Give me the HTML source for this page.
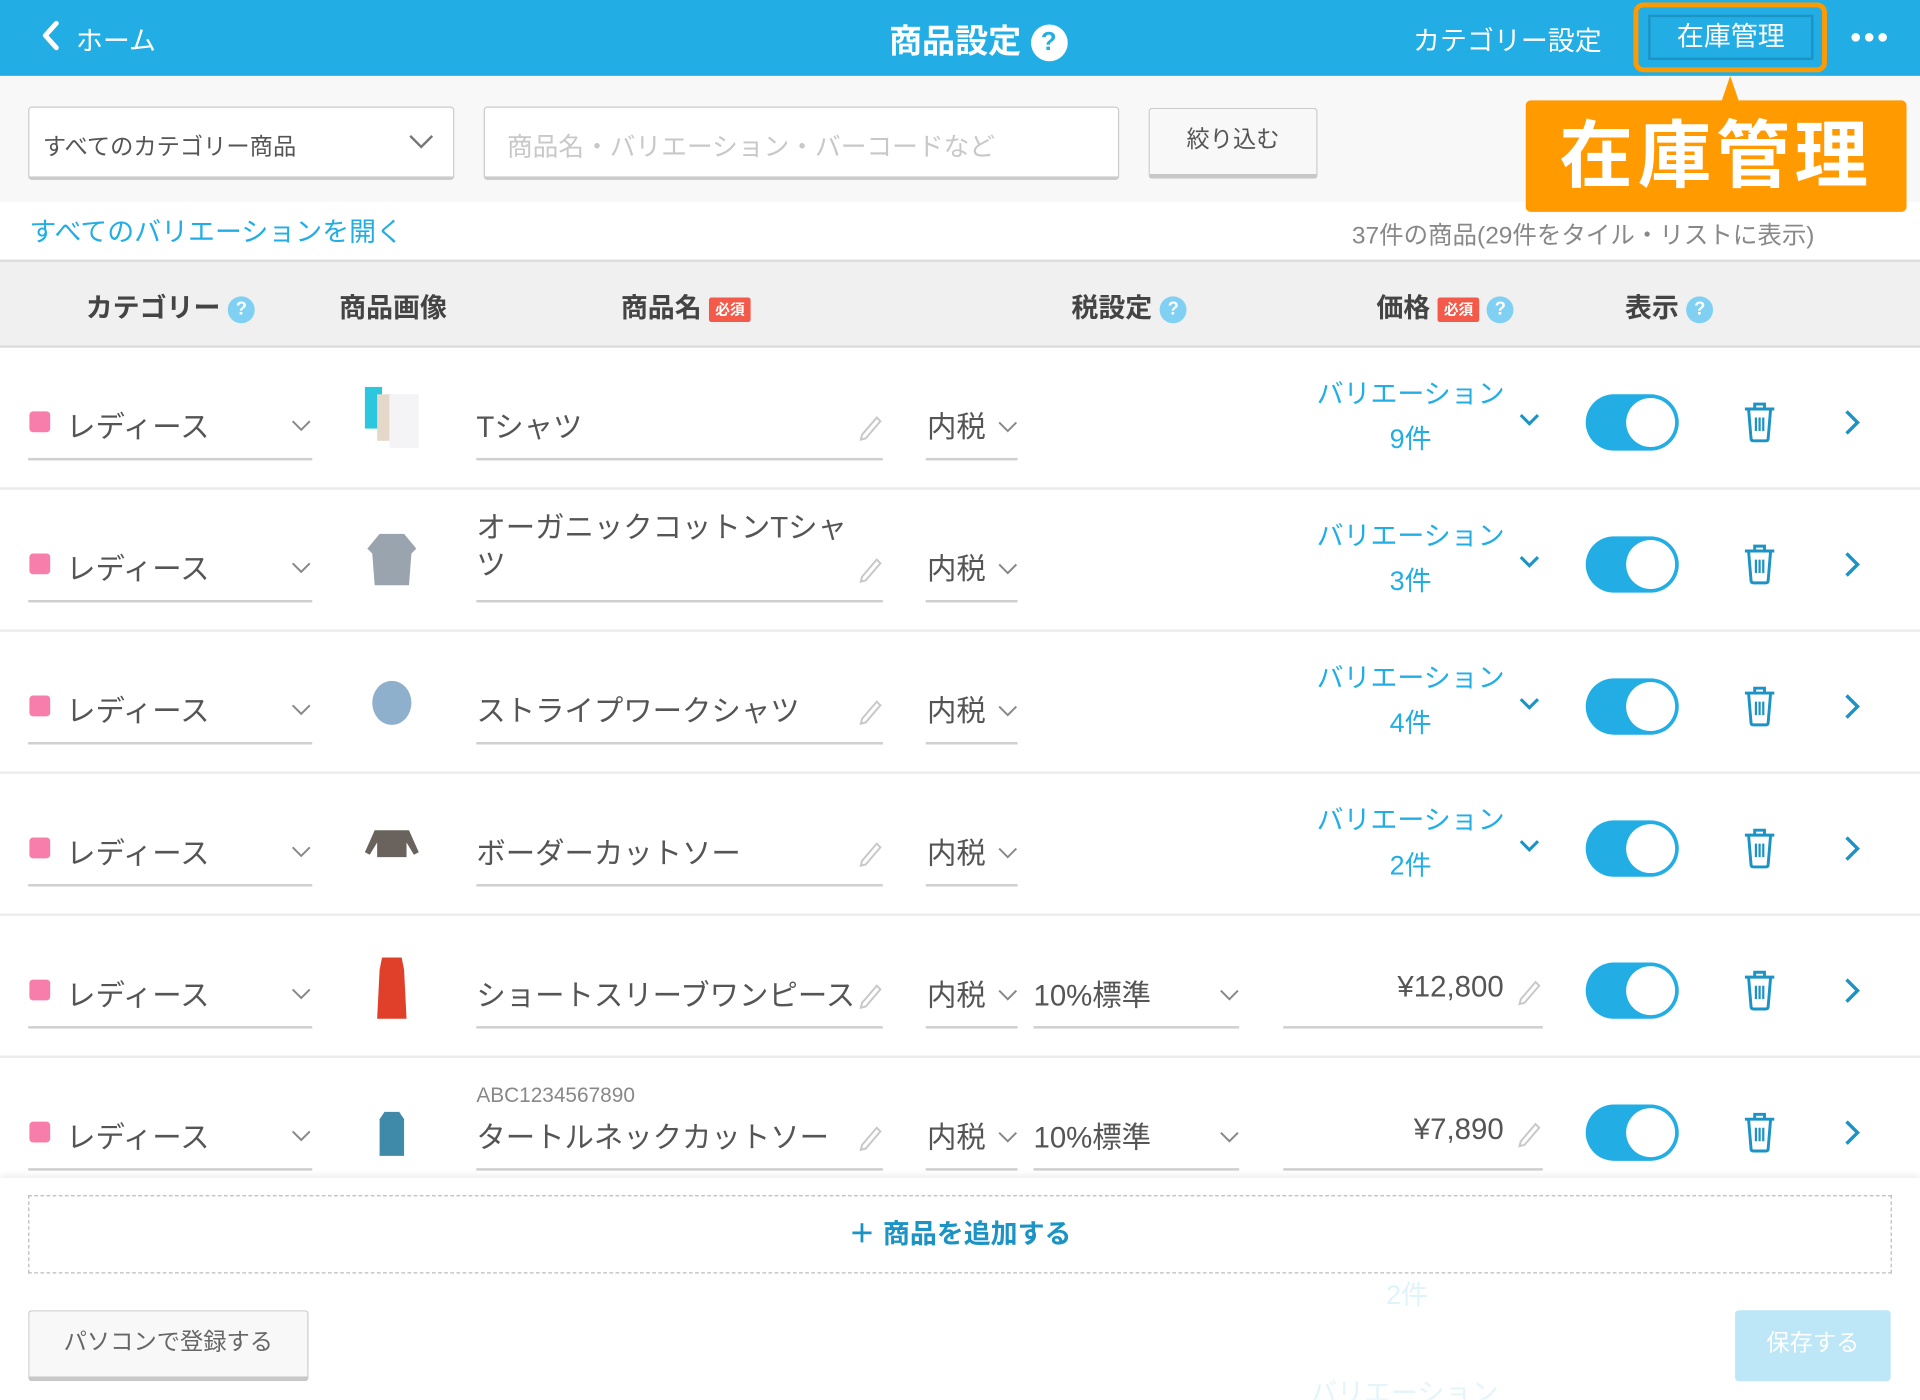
<!DOCTYPE html>
<html><head><meta charset="utf-8">
<style>
*{margin:0;padding:0;box-sizing:border-box}
html,body{width:1920px;height:1400px;overflow:hidden;background:#fff}
#w{position:absolute;left:0;top:0;width:1568px;height:1143px;transform:scale(1.2244898);transform-origin:0 0;font-family:"Liberation Sans","Noto Sans CJK JP",sans-serif;color:#444;background:#fff;overflow:hidden}
.a{position:absolute}
.hdr{left:0;top:0;width:1568px;height:62px;background:#22aee4}
.q{display:inline-block;border-radius:50%;background:#7fd0f2;color:#fff;font-size:15px;font-weight:bold;text-align:center;line-height:22px;width:22px;height:22px;vertical-align:middle}
.req{display:inline-block;background:#f45a4a;color:#fff;font-size:12px;padding:1px 5px;border-radius:2px;vertical-align:middle;line-height:18px}
.th{font-size:22px;font-weight:bold;color:#444;top:234px}
.row{left:0;width:1568px;height:116px;border-bottom:2px solid #ececec}
.row .t{font-size:24px;color:#555}
.ul{height:2px;background:#cfcfcf}
.sq{width:17px;height:17px;background:#f77eaa;border-radius:3px}
.tog{width:76px;height:46px;border-radius:23px;background:#22aee4}
.tog:after{content:"";position:absolute;right:3px;top:3px;width:40px;height:40px;border-radius:50%;background:#fff}
.var{color:#22aee4;font-size:22px;text-align:center;line-height:37px;width:180px}
</style></head><body><div id="w">
<div class="a hdr"></div>
<svg class="a" style="left:32px;top:16px" width="18" height="26"><path d="M14 3 L5 13 L14 23" stroke="#fff" stroke-width="4" fill="none" stroke-linecap="round" stroke-linejoin="round"/></svg>
<div class="a" style="left:62px;top:16px;color:#fff;font-size:22px">ホーム</div>
<div class="a" style="left:726px;top:12px;color:#fff;font-size:27px;font-weight:bold">商品設定 <span style="display:inline-block;width:30px;height:30px;border-radius:50%;background:#fff;color:#22aee4;font-size:21px;text-align:center;line-height:30px;vertical-align:2px">?</span></div>
<div class="a" style="left:1154px;top:16px;color:#fff;font-size:22px">カテゴリー設定</div>
<div class="a" style="left:1334px;top:2px;width:158px;height:57px;border:4px solid #ff9a00;border-radius:8px"></div>
<div class="a" style="left:1346px;top:12px;width:135px;height:37px;background:#22aee4;border:2px solid #1b93c4;color:#fff;font-size:22px;text-align:center;line-height:32px">在庫管理</div>
<div class="a" style="left:1512px;top:27px;width:30px;height:8px"><span class="a" style="left:0;top:0;width:7px;height:7px;border-radius:50%;background:#fff"></span><span class="a" style="left:11px;top:0;width:7px;height:7px;border-radius:50%;background:#fff"></span><span class="a" style="left:22px;top:0;width:7px;height:7px;border-radius:50%;background:#fff"></span></div>
<div class="a" style="left:0;top:62px;width:1568px;height:103px;background:#f8f8f8"></div>
<div class="a" style="left:23px;top:87px;width:348px;height:60px;background:#fff;border:1px solid #ccc;border-bottom:3px solid #ccc;border-radius:3px;font-size:19px;color:#555;padding:17px 11px">すべてのカテゴリー商品</div>
<svg class="a" style="left:333px;top:109px" width="22" height="14"><path d="M2 2 L11 11 L20 2" stroke="#777" stroke-width="2" fill="none"/></svg>
<div class="a" style="left:395px;top:87px;width:519px;height:60px;background:#fff;border:1px solid #ccc;border-bottom:3px solid #ccc;border-radius:3px;font-size:21px;color:#c8c8c8;padding:16px 18px">商品名・バリエーション・バーコードなど</div>
<div class="a" style="left:938px;top:88px;width:138px;height:58px;background:#f8f8f8;border:1px solid #ccc;border-bottom:4px solid #c8c8c8;border-radius:3px;font-size:19px;color:#555;text-align:center;line-height:52px">絞り込む</div>
<svg class="a" style="left:1398px;top:62px" width="30" height="38"><path d="M15 0 L28 38 L2 38 Z" fill="#ff9a00"/></svg>
<div class="a" style="left:1246px;top:82px;width:311px;height:91px;background:#ff9a00;border-radius:4px;color:#fff;font-size:60px;font-weight:bold;text-align:center;line-height:91px;letter-spacing:4px">在庫管理</div>
<div class="a" style="left:24px;top:172px;color:#22aee4;font-size:22px">すべてのバリエーションを開く</div>
<div class="a" style="left:1104px;top:176px;color:#888;font-size:20px">37件の商品(29件をタイル・リストに表示)</div>
<div class="a" style="left:0;top:212px;width:1568px;height:72px;background:#f0f0f0;border-top:2px solid #ddd;border-bottom:2px solid #ddd"></div>
<div class="a th" style="left:70px">カテゴリー <span class="q">?</span></div>
<div class="a th" style="left:277px">商品画像</div>
<div class="a th" style="left:507px">商品名 <span class="req">必須</span></div>
<div class="a th" style="left:875px">税設定 <span class="q">?</span></div>
<div class="a th" style="left:1124px">価格 <span class="req">必須</span> <span class="q">?</span></div>
<div class="a th" style="left:1327px">表示 <span class="q">?</span></div>

<div id="rows"></div>

<div class="a" style="left:0;top:962px;width:1568px;height:90px;background:#fff;box-shadow:0 -3px 5px rgba(0,0,0,.06),0 3px 5px rgba(0,0,0,.06)"></div>
<div class="a" style="left:23px;top:976px;width:1522px;height:64px;border:1.5px dashed #bbb;color:#1b93c4;font-size:22px;font-weight:bold;text-align:center;line-height:62px">＋ 商品を追加する</div>
<div class="a" style="left:0;top:1052px;width:1568px;height:91px;background:#fff"></div>
<div class="a" style="left:1132px;top:1040px;color:#dff3fb;font-size:22px">2件</div>
<div class="a" style="left:1070px;top:1120px;color:#e4f4fb;font-size:22px">バリエーション</div>
<div class="a" style="left:23px;top:1070px;width:229px;height:58px;background:#f8f8f8;border:1px solid #ccc;border-bottom:4px solid #c8c8c8;border-radius:3px;font-size:19px;color:#666;text-align:center;line-height:52px">パソコンで登録する</div>
<div class="a" style="left:1417px;top:1070px;width:127px;height:58px;background:#bde6f6;border-radius:3px;font-size:19px;color:#fff;text-align:center;line-height:56px">保存する</div>
</div>
<script>
(function(){
var names=["Tシャツ","オーガニックコットンTシャ<br>ツ","ストライプワークシャツ","ボーダーカットソー","ショートスリーブワンピース","タートルネックカットソー"];
var vars=["9件","3件","4件","2件",null,null];
var prices=[null,null,null,null,"¥12,800","¥7,890"];
var imgs=[
'<rect x="2" y="4" width="14" height="34" fill="#2cc7de"/><rect x="12" y="10" width="14" height="38" fill="#e6d8c8"/><rect x="22" y="10" width="24" height="44" fill="#f4f4f6"/>',
'<path d="M14 8 L34 8 L44 20 L40 24 L38 50 L10 50 L8 24 L4 20 Z" fill="#9aa4ae"/>',
'<ellipse cx="24" cy="30" rx="16" ry="18" fill="#8fb0cc"/>',
'<path d="M10 18 L38 18 L46 36 L42 38 L36 28 L36 40 L12 40 L12 28 L6 38 L2 36 Z" fill="#6a625c"/>',
'<path d="M16 6 L32 6 L34 16 L36 56 L12 56 L14 16 Z" fill="#e0402a"/>',
'<path d="M18 16 L30 16 L34 22 L34 52 L14 52 L14 22 Z" fill="#3f8aa8"/>'];
var h='';
for(var i=0;i<6;i++){
 var rowTop=284+116*i,c=61;
 h+='<div class="a row" style="top:'+rowTop+'px">';
 h+='<div class="a sq" style="left:24px;top:'+(c-9)+'px"></div>';
 h+='<div class="a t" style="left:54px;top:'+(c-16)+'px">レディース</div>';
 h+='<svg class="a" style="left:238px;top:'+(c-2)+'px" width="16" height="10"><path d="M1 1 L8 8 L15 1" stroke="#888" stroke-width="1.6" fill="none"/></svg>';
 h+='<div class="a ul" style="left:23px;top:'+(c+29)+'px;width:232px"></div>';
 h+='<svg class="a" style="left:290px;top:'+(c-35)+'px" width="64" height="64"><g transform="translate(6,2)">'+imgs[i]+'</g></svg>';
 if(i==1) h+='<div class="a t" style="left:389px;top:'+(c-44)+'px;line-height:30px">'+names[i]+'</div>';
 else h+='<div class="a t" style="left:389px;top:'+(c-16)+'px">'+names[i]+'</div>';
 if(i==5) h+='<div class="a" style="left:389px;top:'+(c-40)+'px;font-size:17px;color:#888">ABC1234567890</div>';
 var pen='<path d="M4 18 L16 4 L19 7 L7 21 L3 22 Z" stroke="#c8c8c8" stroke-width="1.6" fill="none"/>';
 h+='<svg class="a" style="left:700px;top:'+(c-8)+'px" width="24" height="24">'+pen+'</svg>';
 h+='<div class="a ul" style="left:389px;top:'+(c+29)+'px;width:332px"></div>';
 h+='<div class="a t" style="left:757px;top:'+(c-16)+'px">内税</div>';
 h+='<svg class="a" style="left:815px;top:'+(c-1)+'px" width="16" height="10"><path d="M1 1 L8 8 L15 1" stroke="#888" stroke-width="1.6" fill="none"/></svg>';
 h+='<div class="a ul" style="left:756px;top:'+(c+29)+'px;width:75px"></div>';
 if(vars[i]){
  h+='<div class="a var" style="left:1062px;top:'+(c-42)+'px">バリエーション<br>'+vars[i]+'</div>';
  h+='<svg class="a" style="left:1240px;top:'+(c-8)+'px" width="18" height="12"><path d="M2 2 L9 9 L16 2" stroke="#1b93c4" stroke-width="2.5" fill="none"/></svg>';
 } else {
  h+='<div class="a t" style="left:844px;top:'+(c-16)+'px">10%標準</div>';
  h+='<svg class="a" style="left:996px;top:'+(c-1)+'px" width="16" height="10"><path d="M1 1 L8 8 L15 1" stroke="#888" stroke-width="1.6" fill="none"/></svg>';
  h+='<div class="a ul" style="left:844px;top:'+(c+29)+'px;width:168px"></div>';
  h+='<div class="a t" style="left:1040px;width:188px;text-align:right;top:'+(c-16)+'px">'+prices[i]+'</div>';
  h+='<svg class="a" style="left:1238px;top:'+(c-11)+'px" width="24" height="24">'+pen+'</svg>';
  h+='<div class="a ul" style="left:1048px;top:'+(c+29)+'px;width:212px"></div>';
 }
 h+='<div class="a tog" style="left:1295px;top:'+(c-23)+'px"></div>';
 h+='<svg class="a" style="left:1422px;top:'+(c-17)+'px" width="30" height="34"><path d="M3 6 L27 6 M11 6 L11 2 L19 2 L19 6 M6 6 L8 30 Q8 32 10 32 L20 32 Q22 32 22 30 L24 6" stroke="#1b93c4" stroke-width="2.4" fill="none"/><path d="M12 13 V24 M15 13 V24 M18 13 V24" stroke="#1b93c4" stroke-width="1.8"/></svg>';
 h+='<svg class="a" style="left:1505px;top:'+(c-11)+'px" width="16" height="22"><path d="M3 2 L12 11 L3 20" stroke="#1b93c4" stroke-width="2.8" fill="none"/></svg>';
 h+='</div>';
}
document.getElementById('rows').outerHTML=h;
})();
</script>
</body></html>
